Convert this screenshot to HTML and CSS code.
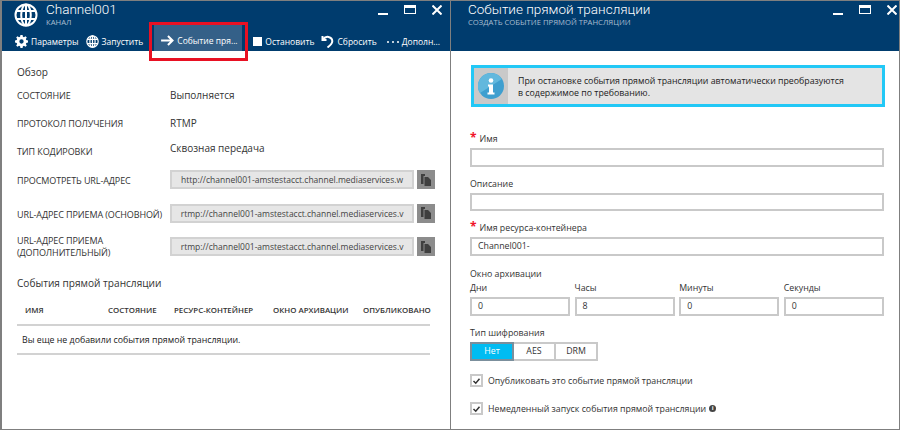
FILE: index.html
```html
<!DOCTYPE html>
<html lang="ru">

<head>
    <title>Channel001</title>
    <meta charset="UTF-8">
    <link rel="stylesheet" href="styles.css">
</head>

<body>
    <section class="blade blade-left">
        <header class="blade-head">
            <div class="title-row">
                <svg class="globe" viewBox="0 0 24 24" fill="none" stroke="#fff" stroke-width="2">
                    <circle cx="12" cy="12" r="10.5" />
                    <ellipse cx="12" cy="12" rx="4.8" ry="10.5" />
                    <path d="M12 1.5v21M2.2 8h19.6M2.2 16h19.6" />
                </svg>
                <div class="titles">
                    <h1>Channel001</h1>
                    <p>КАНАЛ</p>
                </div>
                <div class="win-btns">
                    <span class="win-min"></span>
                    <span class="win-max"></span>
                    <svg class="win-close" viewBox="0 0 10 10" stroke="#fff" stroke-width="2">
                        <path d="M0.5 0.5l9 9M9.5 0.5l-9 9" />
                    </svg>
                </div>
            </div>
            <nav class="commands">
                <a class="cmd">
                    <svg viewBox="0 0 12 12" fill="#fff">
                        <path d="M5 0h2l.3 1.6 1 .4L9.700 1.100l1.200 1.200L10 3.700l.4 1L12 5v2l-1.600.3-.4 1 .9 1.400-1.200 1.200L8.300 10l-1 .4L7 12H5l-.3-1.600-1-.4-1.400.9-1.200-1.200L2 8.300l-.4-1L0 7V5l1.600-.3.4-1-.9-1.400 1.200-1.200L3.700 2l1-.4zM6 4a2 2 0 1 0 0 4 2 2 0 0 0 0-4z" fill-rule="evenodd" />
                    </svg>
                    Параметры
                </a>
                <a class="cmd">
                    <svg viewBox="0 0 24 24" fill="none" stroke="#fff" stroke-width="2.200">
                        <circle cx="12" cy="12" r="10.500" />
                        <ellipse cx="12" cy="12" rx="4.800" ry="10.500" />
                        <path d="M12 1.500v21M2.200 8h19.600M2.200 16h19.600" />
                    </svg>
                    Запустить
                </a>
                <a class="cmd cmd-active">
                    <svg class="arrow" viewBox="0 0 14 12" fill="none" stroke="#fff" stroke-width="2.200">
                        <path d="M0 6h12M7.500 1l5 5-5 5" />
                    </svg>
                    Событие пря...
                </a>
                <a class="cmd cmd-stop">
                    <span class="stop"></span>
                    Остановить
                </a>
                <a class="cmd cmd-reset">
                    <svg viewBox="0 0 12 13" fill="none" stroke="#fff" stroke-width="2">
                        <path d="M1 1v4h4M1.300 4.800C3 2.500 5 1.500 7 2c2.500.6 4 2.600 3.700 4.800C10.400 9 8.500 10.500 6 12.500" />
                    </svg>
                    Сбросить
                </a>
                <a class="cmd cmd-more">
                    <span class="dots"><i></i><i></i><i></i></span>
                    Дополн...
                </a>
            </nav>
        </header>

        <div class="blade-body">
            <h2>Обзор</h2>
            <div class="prop"><span class="prop-name">СОСТОЯНИЕ</span><span class="prop-val">Выполняется</span></div>
            <div class="prop"><span class="prop-name">ПРОТОКОЛ ПОЛУЧЕНИЯ</span><span class="prop-val">RTMP</span></div>
            <div class="prop"><span class="prop-name">ТИП КОДИРОВКИ</span><span class="prop-val prop-val-up">Сквозная передача</span></div>

            <div class="url-row">
                <span class="prop-name">ПРОСМОТРЕТЬ URL-АДРЕС</span>
                <div class="url-box">http://channel001-amstestacct.channel.mediaservices.w</div>
                <button type="button" class="copy"><svg viewBox="0 0 10 12" fill="#3f3f3f"><path d="M0 0h4v2H2.500v8H0zM3.500 3H7l3 3v6H3.500z" /></svg></button>
            </div>
            <div class="url-row">
                <span class="prop-name">URL-АДРЕС ПРИЕМА (ОСНОВНОЙ)</span>
                <div class="url-box">rtmp://channel001-amstestacct.channel.mediaservices.v</div>
                <button type="button" class="copy"><svg viewBox="0 0 10 12" fill="#3f3f3f"><path d="M0 0h4v2H2.500v8H0zM3.500 3H7l3 3v6H3.500z" /></svg></button>
            </div>
            <div class="url-row url-row-wrap">
                <span class="prop-name">URL-АДРЕС ПРИЕМА (ДОПОЛНИТЕЛЬНЫЙ)</span>
                <div class="url-box">rtmp://channel001-amstestacct.channel.mediaservices.v</div>
                <button type="button" class="copy"><svg viewBox="0 0 10 12" fill="#3f3f3f"><path d="M0 0h4v2H2.500v8H0zM3.500 3H7l3 3v6H3.500z" /></svg></button>
            </div>

            <h2 class="events-title">События прямой трансляции</h2>
            <table class="events">
                <thead>
                    <tr>
                        <th>ИМЯ</th>
                        <th>СОСТОЯНИЕ</th>
                        <th>РЕСУРС-КОНТЕЙНЕР</th>
                        <th>ОКНО АРХИВАЦИИ</th>
                        <th>ОПУБЛИКОВАНО</th>
                    </tr>
                </thead>
                <tbody>
                    <tr>
                        <td colspan="5">Вы еще не добавили события прямой трансляции.</td>
                    </tr>
                </tbody>
            </table>
        </div>
        <div class="callout"></div>
    </section>

    <section class="blade blade-right">
        <header class="blade-head">
            <div class="title-row">
                <div class="titles">
                    <h1>Событие прямой трансляции</h1>
                    <p>СОЗДАТЬ СОБЫТИЕ ПРЯМОЙ ТРАНСЛЯЦИИ</p>
                </div>
                <div class="win-btns">
                    <span class="win-min"></span>
                    <span class="win-max"></span>
                    <svg class="win-close" viewBox="0 0 10 10" stroke="#fff" stroke-width="2">
                        <path d="M0.500 0.500l9 9M9.500 0.500l-9 9" />
                    </svg>
                </div>
            </div>
        </header>

        <div class="blade-body form">
            <div class="notice">
                <div class="notice-icon">
                    <svg viewBox="0 0 26 26">
                        <circle cx="13" cy="13" r="13" fill="#3f9fcf" />
                        <path d="M13 0a13 13 0 0 0-11 20L24 6A13 13 0 0 0 13 0z" fill="#62b8dd" />
                        <circle cx="13" cy="7.500" r="2.300" fill="#fff" />
                        <path d="M10 11.500h5v8h1.500v2h-7v-2H11v-6h-1z" fill="#fff" />
                    </svg>
                </div>
                <p>При остановке события прямой трансляции автоматически преобразуются<br>в содержимое по требованию.</p>
            </div>

            <label class="field-label first"><span class="req">*</span>Имя</label>
            <div class="input"></div>
            <label class="field-label">Описание</label>
            <div class="input"></div>
            <label class="field-label"><span class="req">*</span>Имя ресурса-контейнера</label>
            <div class="input">Channel001-</div>

            <label class="field-label archive">Окно архивации</label>
            <div class="time-grid">
                <div><label>Дни</label><div class="input">0</div></div>
                <div><label>Часы</label><div class="input">8</div></div>
                <div><label>Минуты</label><div class="input">0</div></div>
                <div><label>Секунды</label><div class="input">0</div></div>
            </div>

            <label class="field-label cipher">Тип шифрования</label>
            <div class="toggle">
                <span class="on">Нет</span>
                <span>AES</span>
                <span>DRM</span>
            </div>

            <div class="check check-first">
                <span class="box"><svg viewBox="0 0 12 10" fill="none" stroke="#333" stroke-width="2"><path d="M2 5l3 3 5-6" /></svg></span>
                Опубликовать это событие прямой трансляции
            </div>
            <div class="check">
                <span class="box"><svg viewBox="0 0 12 10" fill="none" stroke="#333" stroke-width="2"><path d="M2 5l3 3 5-6" /></svg></span>
                Немедленный запуск события прямой трансляции
                <span class="hint">i</span>
            </div>
        </div>
    </section>
</body>

</html>
```

FILE: styles.css
```css
html, body {
    height: 100%;
}

body {
    margin: 0;
    display: flex;
    width: 900px;
    height: 430px;
    overflow: hidden;
    background: #fff;
    color: #333;
    font-family: "Open Sans", "Noto Sans", sans-serif;
    font-size: 8.8px;
}

.blade {
    position: relative;
    box-sizing: border-box;
    height: 430px;
    border: 1px solid #7f7f7f;
    border-left-width: 2px;
    overflow: hidden;
}

.blade-left {
    width: 451px;
}

.blade-right {
    width: 449px;
    border-left-width: 0;
    border-right-width: 1px;
}

.blade-head {
    box-sizing: border-box;
    height: 50px;
    background: #003c6e;
    color: #fff;
}

.title-row {
    display: flex;
    height: 26px;
}

.globe {
    flex: none;
    width: 24px;
    height: 24px;
    margin: 2px 8px 0 12px;
}

.titles {
    flex: 1;
}

.blade-right .titles {
    padding-left: 17px;
}

h1 {
    margin: 0;
    padding-top: 1px;
    font-family: Roboto, "Open Sans", sans-serif;
    font-size: 13.5px;
    font-weight: 300;
    line-height: 15px;
}

.titles p {
    margin: 1px 0 0;
    font-size: 7.7px;
    line-height: 9px;
    color: #a9bdd0;
    white-space: nowrap;
}

.win-btns {
    display: flex;
    align-items: flex-start;
    gap: 16px;
    padding: 4px 8px 0 0;
}

.blade-right .win-btns {
    padding-right: 2px;
}

.win-min {
    width: 10px;
    height: 2px;
    background: #fff;
    margin-top: 8px;
}

.win-max {
    box-sizing: border-box;
    width: 12px;
    height: 9px;
    border: 1px solid #fff;
    border-top-width: 3px;
}

.win-close {
    width: 10px;
    height: 10px;
}

.commands {
    display: flex;
    align-items: stretch;
    padding-left: 13px;
    height: 24px;
}

.cmd {
    display: flex;
    align-items: center;
    gap: 3px;
    padding-top: 5px;
    margin-right: 7px;
    font-size: 8.5px;
    white-space: nowrap;
}

.cmd svg {
    flex: none;
    width: 13px;
    height: 13px;
}

.cmd-active {
    box-sizing: border-box;
    width: 88px;
    height: 27px;
    margin: -3px 11px 0 4px;
    padding: 5px 0 0 7px;
    background: #346088;
}

.cmd .arrow {
    width: 13px;
    height: 11px;
}

.stop {
    flex: none;
    width: 9px;
    height: 9px;
    background: #fff;
}

.cmd-reset {
    margin-right: 10px;
}

.dots {
    display: flex;
    gap: 3px;
}

.dots i {
    width: 2px;
    height: 2px;
    background: #fff;
    border-radius: 50%;
}

.cmd-more {
    margin-right: 0;
}

.blade-body {
    padding: 14px 15px 0;
}

h2 {
    margin: 0;
    font-size: 10.1px;
    font-weight: normal;
    line-height: 14px;
}

.prop {
    display: flex;
    height: 28px;
    align-items: center;
}

h2 + .prop {
    margin-top: 2px;
}

.prop-name {
    width: 153px;
    flex: none;
    margin-top: 1px;
    font-size: 9px;
    line-height: 12px;
    letter-spacing: -0.1px;
}

.prop-val {
    font-size: 10px;
}

.prop-val-up {
    margin-bottom: 6px;
}

.url-row {
    display: flex;
    align-items: center;
    height: 33.5px;
}

.url-row .prop-name {
    margin-top: 3px;
}

.url-row-wrap .prop-name {
    margin-top: 0;
}

.prop + .url-row {
    margin-top: -2px;
}

.url-box {
    box-sizing: border-box;
    width: 245px;
    height: 19px;
    line-height: 15px;
    border: 2px solid #d2d2d2;
    background: #e6e6e6;
    text-align: center;
    font-size: 8.5px;
    white-space: nowrap;
    overflow: hidden;
    color: #444;
}

.copy {
    width: 18px;
    height: 19px;
    margin-left: 3px;
    padding: 0;
    border: none;
    background: #8c8c8c;
    display: flex;
    align-items: center;
    justify-content: center;
}

.copy svg {
    width: 10px;
    height: 12px;
}

.events-title {
    margin-top: 12.5px;
}

.events {
    width: 413px;
    margin-top: 5px;
    border-collapse: collapse;
    table-layout: fixed;
}

.events th {
    height: 29px;
    padding: 0;
    font-size: 7.9px;
    font-weight: 600;
    text-align: left;
    white-space: nowrap;
    border-bottom: 2px solid #d2d2d2;
}

.events th:nth-child(1) {
    width: 91px;
    padding-left: 8px;
    box-sizing: border-box;
}

.events th:nth-child(2) { width: 66px; }
.events th:nth-child(3) { width: 99px; }
.events th:nth-child(4) { width: 90px; }

.events td {
    height: 27px;
    padding: 0 0 0 5px;
    font-size: 8.8px;
    color: #222;
    border-bottom: 2px solid #d2d2d2;
}

.callout {
    position: absolute;
    left: 147px;
    top: 21px;
    width: 99px;
    height: 39px;
    box-sizing: border-box;
    border: 3px solid #e81123;
}

.form {
    padding: 14px 15px 0 19px;
}

.notice {
    display: flex;
    box-sizing: border-box;
    width: 414px;
    height: 42px;
    margin-left: 1px;
    border: 3px solid #22c8f6;
    background: #e4e4e4;
}

.notice-icon {
    width: 34px;
    flex: none;
    background: #c9c9c9;
    display: flex;
    align-items: center;
    justify-content: center;
}

.notice-icon svg {
    width: 26px;
    height: 26px;
}

.notice p {
    margin: 0;
    padding: 7px 0 0 10px;
    font-size: 8.8px;
    line-height: 12px;
    color: #222;
}

.field-label {
    display: block;
    margin-top: 9px;
    line-height: 17px;
}

.field-label.first {
    margin-top: 24px;
}

.req {
    color: #f0142a;
    font-size: 12px;
    font-weight: bold;
    margin-right: 3px;
    line-height: 10px;
}

.input {
    box-sizing: border-box;
    height: 18.5px;
    line-height: 14.5px;
    padding-left: 6px;
    border: 2px solid #c9c9c9;
    font-size: 8.8px;
    color: #333;
}

.form .input {
    width: 414px;
}

.field-label.archive {
    margin-top: 11.5px;
    line-height: 14px;
}

.time-grid {
    display: grid;
    grid-template-columns: repeat(4, 100px);
    column-gap: 4.6px;
    width: 414px;
}

.time-grid label {
    display: block;
    line-height: 15px;
    margin-bottom: 1px;
}

.form .time-grid .input {
    width: 100px;
}

.field-label.cipher {
    margin-top: 9.5px;
}

.toggle {
    display: flex;
    width: 128px;
    height: 19px;
}

.toggle span {
    flex: 1;
    box-sizing: border-box;
    text-align: center;
    line-height: 15px;
    border: 2px solid #c9c9c9;
    border-left-width: 0;
}

.toggle span:first-child {
    border-left-width: 2px;
}

.toggle .on {
    background: #00bcf2;
    border-color: #7b8f9c;
    color: #fff;
}

.check {
    display: flex;
    align-items: center;
    gap: 5px;
    height: 15px;
    margin-top: 13px;
}

.check-first {
    margin-top: 12px;
}

.box {
    box-sizing: border-box;
    flex: none;
    width: 13px;
    height: 13px;
    border: 2px solid #c9c9c9;
    display: flex;
    align-items: center;
    justify-content: center;
}

.box svg {
    width: 9px;
    height: 8px;
}

.hint {
    width: 7px;
    height: 7px;
    border-radius: 50%;
    background: #444;
    color: #fff;
    font-size: 6px;
    font-weight: bold;
    line-height: 7px;
    text-align: center;
    margin-left: -2px;
}
```
